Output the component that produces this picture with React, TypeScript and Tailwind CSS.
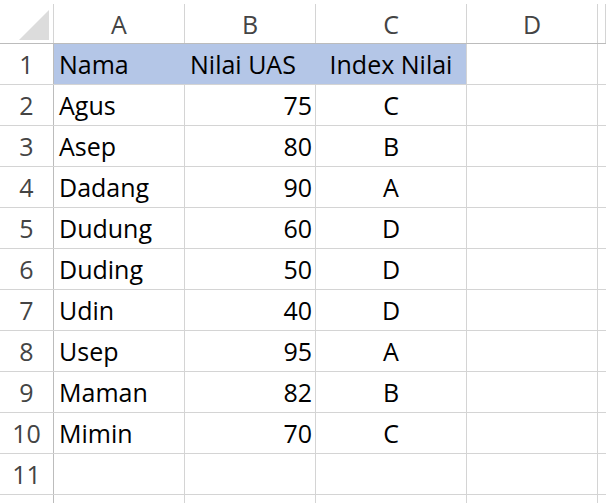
const cols = ["A", "B", "C", "D", ""];

const rows: [string, string, string][] = [
  ["Agus", "75", "C"],
  ["Asep", "80", "B"],
  ["Dadang", "90", "A"],
  ["Dudung", "60", "D"],
  ["Duding", "50", "D"],
  ["Udin", "40", "D"],
  ["Usep", "95", "A"],
  ["Maman", "82", "B"],
  ["Mimin", "70", "C"],
];

const grid = "grid grid-cols-[54px_131px_131px_151px_131px_1fr]";

const App = () => {
  return (
    <div
      className="w-[606px] h-[503px] overflow-hidden bg-white text-[25px] text-black"
      style={{ fontFamily: '"Open Sans", "Noto Sans", sans-serif' }}
    >
      {/* column headers */}
      <div className={`${grid} h-[44px] border-b border-[#bcbcbc]`}>
        <div className="flex items-end justify-end pr-[4px] pb-[3px] border-r border-[#d4d4d4] mt-[4px]">
          <svg width="30" height="30" viewBox="0 0 30 30">
            <polygon points="30,0 30,30 0,30" fill="#dcdcdc" />
          </svg>
        </div>
        {cols.map((c, i) => (
          <div
            key={i}
            className="mt-[4px] flex items-center justify-center border-r border-[#d4d4d4] text-[#444] leading-none pt-[2px]"
          >
            {c}
          </div>
        ))}
      </div>

      {/* row 1: headers */}
      <div className={`${grid} h-[41px] border-b border-[#d4d4d4]`}>
        <div className="flex items-center justify-center pt-[2px] border-r border-[#bcbcbc] text-[#444]">1</div>
        <div className="flex items-center pt-[2px] pl-[5px] bg-[#b4c6e7] border-r border-[#b4c6e7]">Nama</div>
        <div className="flex items-center pt-[2px] pl-[5px] whitespace-nowrap bg-[#b4c6e7] border-r border-[#b4c6e7]">Nilai UAS</div>
        <div className="flex items-center pt-[2px] justify-center whitespace-nowrap bg-[#b4c6e7] border-r border-[#d4d4d4]">Index Nilai</div>
        <div className="border-r border-[#d4d4d4]" />
        <div />
      </div>

      {rows.map((r, i) => (
        <div key={i} className={`${grid} h-[41px] border-b border-[#d4d4d4]`}>
          <div className="flex items-center justify-center pt-[2px] border-r border-[#bcbcbc] text-[#444]">{i + 2}</div>
          <div className="flex items-center pt-[2px] pl-[5px] border-r border-[#d4d4d4]">{r[0]}</div>
          <div className="flex items-center pt-[2px] justify-end pr-[3px] border-r border-[#d4d4d4]">{r[1]}</div>
          <div className="flex items-center pt-[2px] justify-center border-r border-[#d4d4d4]">{r[2]}</div>
          <div className="border-r border-[#d4d4d4]" />
          <div />
        </div>
      ))}

      <div className={`${grid} h-[41px] border-b border-[#d4d4d4]`}>
        <div className="flex items-center justify-center pt-[2px] border-r border-[#bcbcbc] text-[#444]">11</div>
        <div className="border-r border-[#d4d4d4]" />
        <div className="border-r border-[#d4d4d4]" />
        <div className="border-r border-[#d4d4d4]" />
        <div className="border-r border-[#d4d4d4]" />
        <div />
      </div>
      <div className={`${grid} h-[20px]`}>
        <div className="border-r border-[#bcbcbc]" />
        <div className="border-r border-[#d4d4d4]" />
        <div className="border-r border-[#d4d4d4]" />
        <div className="border-r border-[#d4d4d4]" />
        <div className="border-r border-[#d4d4d4]" />
        <div />
      </div>
    </div>
  );
};

export default App;
